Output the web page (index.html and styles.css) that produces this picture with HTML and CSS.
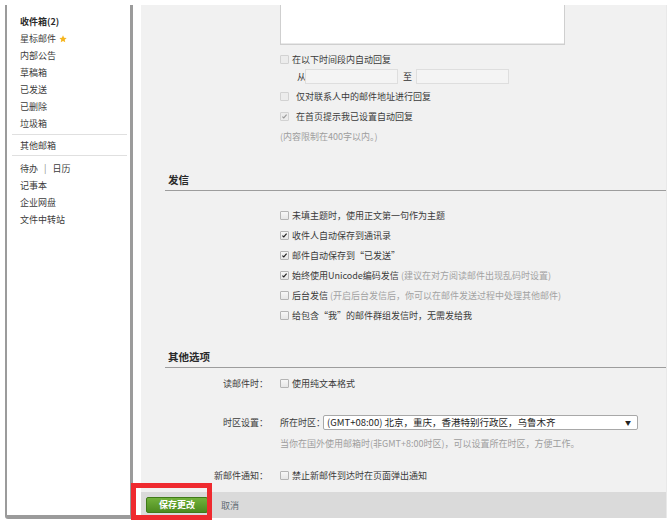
FILE: index.html
```html
<!DOCTYPE html>
<html lang="zh-CN">
<head>
<meta charset="utf-8">
<title>设置</title>
<link rel="stylesheet" href="styles.css">
</head>
<body>
<div class="page">
  <aside class="sidebar">
    <ul class="nav">
      <li class="strong">收件箱(2)</li>
      <li>星标邮件 <svg class="star" viewBox="0 0 10 10" width="8" height="8"><path d="M5 0.4 L6.35 3.4 L9.6 3.7 L7.15 5.85 L7.85 9.1 L5 7.45 L2.15 9.1 L2.85 5.85 L0.4 3.7 L3.65 3.4 Z" fill="#f6b51d"/></svg></li>
      <li>内部公告</li>
      <li>草稿箱</li>
      <li>已发送</li>
      <li>已删除</li>
      <li>垃圾箱</li>
    </ul>
    <div class="sep"></div>
    <ul class="nav">
      <li>其他邮箱</li>
    </ul>
    <div class="sep"></div>
    <ul class="nav">
      <li>待办 <span class="pipe">|</span> 日历</li>
      <li>记事本</li>
      <li>企业网盘</li>
      <li>文件中转站</li>
    </ul>
  </aside>

  <main class="main">
    <div class="content">
      <div class="col">
        <div class="textarea"></div>
        <div class="row dis first"><span class="cb"></span><span class="txt">在以下时间段内自动回复</span></div>
        <div class="range"><span class="from">从</span><span class="inp"></span><span class="to">至</span><span class="inp"></span></div>
        <div class="row dis"><span class="cb"></span><span class="txt wide">仅对联系人中的邮件地址进行回复</span></div>
        <div class="row dis"><span class="cb"><svg viewBox="0 0 9 9"><path d="M1.8 4.6 L3.6 6.4 L7.2 2.2" class="tick"/></svg></span><span class="txt wide">在首页提示我已设置自动回复</span></div>
        <div class="row hint">(内容限制在400字以内。)</div>
      </div>

      <section class="sec">
        <h3 class="sec-head">发信</h3>
        <div class="col list">
          <div class="row"><span class="cb"></span><span class="txt">未填主题时，使用正文第一句作为主题</span></div>
          <div class="row"><span class="cb on"><svg viewBox="0 0 9 9"><path d="M1.8 4.6 L3.6 6.4 L7.2 2.2" class="tick"/></svg></span><span class="txt">收件人自动保存到通讯录</span></div>
          <div class="row"><span class="cb on"><svg viewBox="0 0 9 9"><path d="M1.8 4.6 L3.6 6.4 L7.2 2.2" class="tick"/></svg></span><span class="txt">邮件自动保存到“已发送”</span></div>
          <div class="row"><span class="cb on"><svg viewBox="0 0 9 9"><path d="M1.8 4.6 L3.6 6.4 L7.2 2.2" class="tick"/></svg></span><span class="txt">始终使用Unicode编码发信 <span class="note">(建议在对方阅读邮件出现乱码时设置)</span></span></div>
          <div class="row"><span class="cb"></span><span class="txt">后台发信 <span class="note">(开启后台发信后，你可以在邮件发送过程中处理其他邮件)</span></span></div>
          <div class="row"><span class="cb"></span><span class="txt">给包含“我”的邮件群组发信时，无需发给我</span></div>
        </div>
      </section>

      <section class="sec sec2">
        <h3 class="sec-head">其他选项</h3>
        <div class="opt opt-read">
          <span class="lbl">读邮件时：</span>
          <div class="row"><span class="cb"></span><span class="txt">使用纯文本格式</span></div>
        </div>
        <div class="opt opt-tz">
          <span class="lbl">时区设置：</span>
          <div class="row"><span class="txt0">所在时区：</span><div class="select"><span class="sel-text">(GMT+08:00) 北京，重庆，香港特别行政区，乌鲁木齐</span><span class="arrow">▼</span></div></div>
        </div>
        <div class="opt opt-hint">
          <span class="lbl"></span>
          <div class="row hint">当你在国外使用邮箱时(非GMT+8:00时区)，可以设置所在时区，方便工作。</div>
        </div>
        <div class="opt opt-new">
          <span class="lbl">新邮件通知：</span>
          <div class="row"><span class="cb"></span><span class="txt">禁止新邮件到达时在页面弹出通知</span></div>
        </div>
      </section>
    </div>
    <div class="footer">
      <button class="save">保存更改</button>
      <a class="cancel">取消</a>
    </div>
  </main>
</div>
<div class="highlight"></div>
</body>
</html>
```

FILE: styles.css
```css
* { box-sizing: border-box; }
html, body { margin: 0; padding: 0; background: #fff; }
body {
  font-family: "Noto Sans CJK SC", "Noto Sans", sans-serif;
  font-size: 9px;
  color: #333;
  width: 671px;
  height: 529px;
  overflow: hidden;
  position: relative;
}
.page {
  display: flex;
  align-items: flex-start;
  padding: 5px 0 0 5px;
}

/* sidebar */
.sidebar {
  width: 128px;
  height: 514px;
  border-left: 2px solid #9b9b9b;
  border-right: 3px solid #9b9b9b;
  border-bottom: 4px solid #9b9b9b;
  border-bottom-left-radius: 3px;
  padding-top: 8px;
  margin-right: 8px;
  background: #fff;
}
.nav { list-style: none; margin: 0; padding: 0 0 0 13px; }
.nav li { line-height: 17px; height: 17px; color: #3c3c3c; white-space: nowrap; }
.nav li.strong { font-weight: bold; color: #2b2b2b; }
.star { vertical-align: -1px; margin-left: 1px; }
.pipe { color: #888; margin: 0 4px; }
.sep { height: 1px; background: #e0e0e0; margin: 2px 3px 2px 5px; }
.sep + .nav + .sep { margin-top: 1px; margin-bottom: 4px; }

/* main */
.main {
  width: 526px;
  height: 513px;
  background: #f1f1f1;
  display: flex;
  flex-direction: column;
  border-right: 1px solid #e9e9e9;
}
.content { flex: 1; overflow: hidden; }
.col { margin-left: 139px; }
.textarea {
  width: 285px;
  height: 40px;
  background: #fff;
  border: 1px solid #cfcfcf;
  border-top: none;
  box-shadow: inset 0 -1px 0 #e8e8e8;
}
.row {
  display: flex;
  align-items: center;
  height: 20px;
  white-space: nowrap;
}
.row.first { margin-top: 4px; }
.cb {
  width: 9px;
  height: 9px;
  flex: none;
  border: 1px solid #b4b4b4;
  border-radius: 1px;
  background: linear-gradient(#f7f7f7, #e6e6e6);
  display: inline-flex;
  margin-top: 1px;
}
.cb svg { width: 7px; height: 7px; }
.tick { stroke: #222; stroke-width: 1.5; fill: none; }
.dis .cb { border-color: #d2d2d2; background: #ececec; }
.dis .tick { stroke: #999; }
.txt { margin-left: 3px; color: #3a3a3a; }
.txt.wide { margin-left: 7px; }
.note { color: #a2a2a2; }
.hint { color: #9e9e9e; }

.range {
  display: flex;
  align-items: center;
  height: 15px;
  margin: 0 0 2px;
}
.from { margin-left: 17px; width: 8px; }
.inp {
  width: 93px;
  height: 15px;
  background: #f4f4f4;
  border: 1px solid #dedede;
}
.to { margin: 0 4px 0 5px; }

/* sections */
.sec { margin-top: 24px; }
.sec-head {
  margin: 0 0 0 24px;
  padding-left: 3px;
  height: 21px;
  line-height: 20px;
  font-size: 10.5px;
  font-weight: bold;
  color: #2a2a2a;
  border-bottom: 1px solid #9d9d9d;
}
.list { margin-top: 14px; }
.sec2 { margin-top: 22px; }

.opt {
  display: grid;
  grid-template-columns: 127px 1fr;
  column-gap: 12px;
  align-items: center;
}
.lbl { text-align: right; color: #3a3a3a; white-space: nowrap; }
.opt-read { margin-top: 5px; }
.opt-tz { margin-top: 19px; }
.opt-hint { margin-top: 1px; }
.opt-new { margin-top: 12px; }
.txt0 { color: #3a3a3a; width: 43px; flex: none; }
.select {
  width: 315px;
  height: 15px;
  background: #fff;
  border: 1px solid #a8a8a8;
  border-radius: 2px;
  display: flex;
  align-items: center;
  justify-content: space-between;
  padding: 0 6px 0 3px;
  font-size: 9.5px;
  color: #1e1e1e;
}
.arrow { font-size: 6px; color: #222; }

/* footer */
.footer {
  height: 26px;
  background: #dadada;
  display: flex;
  align-items: center;
  padding-left: 5px;
}
.save {
  width: 62px;
  height: 16px;
  padding: 0;
  border: 1px solid #3f7a18;
  border-radius: 2px;
  background: linear-gradient(#72b23c, #4d8b20);
  color: #fff;
  font-family: inherit;
  font-size: 9px;
  font-weight: bold;
  line-height: 14px;
}
.cancel { margin-left: 13px; color: #5f6a74; }

/* annotation overlay */
.highlight {
  position: absolute;
  left: 131px;
  top: 483px;
  width: 81px;
  height: 37px;
  border: 5px solid #ef2a2f;
}
```
